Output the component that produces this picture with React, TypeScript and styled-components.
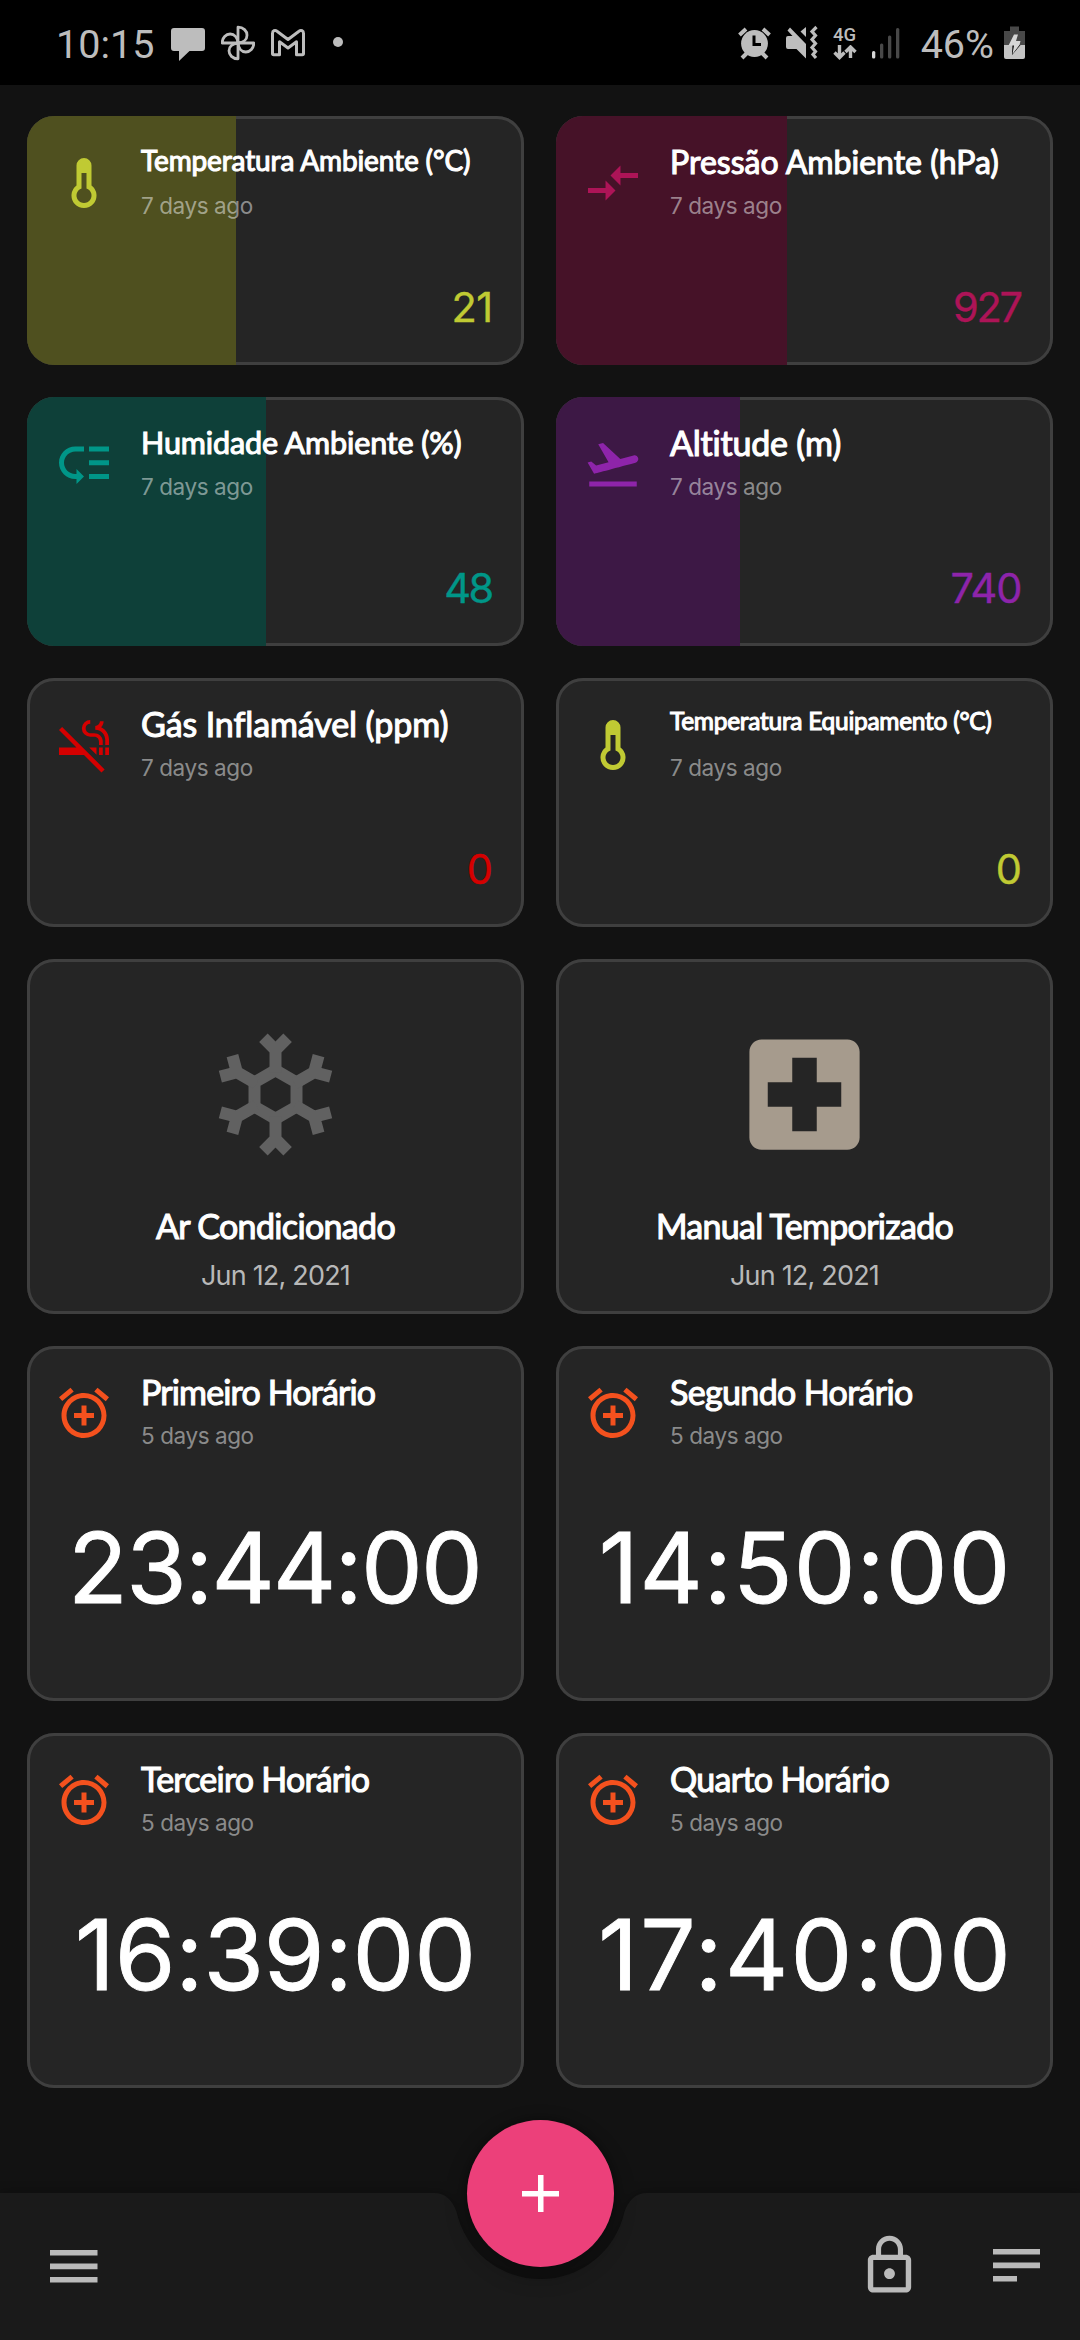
import React from "react";
import styled, { createGlobalStyle } from "styled-components";
import {
  MdAlarmAdd,
  MdCompareArrows,
  MdFlightTakeoff,
  MdLocalHospital,
  MdLockOutline,
  MdLowPriority,
  MdSmokeFree,
} from "react-icons/md";

const GlobalStyle = createGlobalStyle`
  html, body { margin: 0; background: #121212; }
  * { box-sizing: border-box; }
  svg { display: block; flex: none; }
`;

const Screen = styled.div`
  width: 1080px;
  height: 2340px;
  display: flex;
  flex-direction: column;
  overflow: hidden;
  background: #121212;
  color: #fff;
  font-family: Lato, "Liberation Sans", sans-serif;
`;

/* ---------- status bar ---------- */

const StatusBar = styled.header`
  height: 85px;
  flex: none;
  display: flex;
  justify-content: space-between;
  align-items: center;
  padding: 0 55px 0 56px;
  background: #000;
  color: #bdbdbd;
  font-family: Roboto, "Liberation Sans", sans-serif;
`;

const StatusGroup = styled.div<{ $gap: number }>`
  display: flex;
  align-items: center;
  gap: ${(p) => p.$gap}px;
`;

const StatusText = styled.span`
  font-size: 39.5px;
  line-height: 78px;
  padding-top: 4px;
  white-space: nowrap;
`;

const Dot = styled.span`
  width: 10px;
  height: 10px;
  margin: 0 0 1px 12px;
  border-radius: 50%;
  background: currentColor;
`;

const Network = styled.span`
  display: flex;
  flex-direction: column;
  align-items: center;
  width: 24px;
  font-size: 18.5px;
  font-weight: 500;
  line-height: 19px;
`;

const ChatIcon = () => (
  <svg width="34" height="36" viewBox="0 0 34 36" fill="currentColor">
    <path d="M3 3h28a3 3 0 0 1 3 3v17a3 3 0 0 1-3 3H18.500L8 36V26H3a3 3 0 0 1-3-3V6a3 3 0 0 1 3-3z" />
  </svg>
);

const PinwheelIcon = () => (
  <svg width="34" height="36" viewBox="0 0 34 36" fill="none" stroke="currentColor" strokeWidth="2.800" strokeLinejoin="round">
    {[0, 90, 180, 270].map((angle) => (
      <path key={angle} transform={`rotate(${angle} 17 18)`} d="M17 18V2.200C22.500 2.200 26 6 26 10.200S22.500 17.500 17 18z" />
    ))}
  </svg>
);

const MailIcon = () => (
  <svg width="34" height="36" viewBox="0 0 34 36" fill="none" stroke="currentColor" strokeWidth="3" strokeLinejoin="round">
    <path d="M1.500 28.500V8.500C1.500 5.500 4 4.600 6 6.200L17 14.500 28 6.200C30 4.600 32.500 5.500 32.500 8.500V28.500c0 .8-.4 1.200-1.200 1.200H25.500V16.800L17 23 8.500 16.800V29.700H2.700c-.8 0-1.200-.4-1.200-1.200z" />
  </svg>
);

const AlarmIcon = () => (
  <svg width="33" height="36" viewBox="0 0 33 36">
    <g stroke="#bdbdbd" strokeWidth="4" fill="none">
      <path d="M1.500 10 8 4M25 4l6.500 6M9 28l-5 5M24 28l5 5" />
    </g>
    <circle cx="16.500" cy="18.500" r="13.400" fill="#bdbdbd" />
    <path d="M16 10.500V19.500h7" stroke="#000" strokeWidth="3" fill="none" />
  </svg>
);

const MuteIcon = () => (
  <svg width="32" height="36" viewBox="0 0 32 36" fill="#bdbdbd">
    <path d="M4 2.500 20 19v14.500L10.500 24H2a2 2 0 0 1-2-2V13a2 2 0 0 1 2-2h4.500L1.500 5.500z" />
    <path d="M20 2v10l-5.500-5.500z" />
    <path d="M30.500 2 26 6.500l3.500 4-3.500 4 3.500 4-3.500 4 3.500 4-2.500 3 3 3.500" fill="none" stroke="#bdbdbd" strokeWidth="3.200" />
  </svg>
);

const DataArrows = () => (
  <svg width="24" height="15" viewBox="0 0 24 15" fill="none" stroke="currentColor" strokeWidth="3.400">
    <path d="M6.500 0v12M1.500 7.500l5 5 5-5M17.500 13V2.500M12.500 7l5-5 5 5" />
  </svg>
);

const SignalIcon = () => (
  <svg width="28" height="36" viewBox="0 0 28 36">
    <rect x="0" y="26" width="3.300" height="7.500" rx="1.500" fill="#d6d6d6" />
    <rect x="8" y="18.500" width="3.300" height="15" rx="1.500" fill="#484848" />
    <rect x="16" y="10.500" width="3.300" height="23" rx="1.500" fill="#484848" />
    <rect x="24" y="3" width="3.300" height="30.500" rx="1.500" fill="#484848" />
  </svg>
);

const BatteryIcon = () => (
  <svg width="21" height="36" viewBox="0 0 21 36">
    <path d="M6 1.500h9V6h6v14H0V6h6z" fill="#484848" />
    <path d="M0 20h21v12a2 2 0 0 1-2 2H2a2 2 0 0 1-2-2z" fill="#c4c4c4" />
    <path d="M8.500 20 8 30l8.500-10z" fill="#000" />
    <path d="M10 9.500h4L12 16h4.500L15.500 20 8.500 29l1.500-8.500H4.500z" fill="#d6d6d6" />
  </svg>
);

/* ---------- dashboard cards ---------- */

const Grid = styled.main`
  flex: none;
  display: grid;
  grid-template-columns: repeat(2, 497px);
  grid-template-rows: repeat(3, 249px) repeat(3, 355px);
  gap: 32px;
  padding: 31px 27px 0;
`;

const Card = styled.section`
  position: relative;
  display: flex;
  flex-direction: column;
  overflow: hidden;
  border-radius: 27px;
  background: #252525;
  box-shadow: inset 0 0 0 3px #3f3f3f;
`;

const Progress = styled.div<{ $tint: string }>`
  position: absolute;
  top: 0;
  bottom: 0;
  left: 0;
  background: ${(p) => p.$tint};
`;

const CardHeader = styled.div`
  position: relative;
  display: flex;
  gap: 27px;
  height: 103px;
  padding: 26px 0 0 27px;
`;

const IconSlot = styled.div<{ $color: string }>`
  margin-top: 11px;
  color: ${(p) => p.$color};
`;

const Labels = styled.div`
  display: flex;
  flex-direction: column;
  gap: 10px;
`;

const Title = styled.h2<{ $size?: number; $spacing?: number; $lift?: number }>`
  margin: 0 0 ${(p) => 2 * (p.$lift ?? 0)}px;
  font-size: ${(p) => p.$size ?? 34}px;
  font-weight: 400;
  line-height: ${(p) => 40 - 2 * (p.$lift ?? 0)}px;
  letter-spacing: ${(p) => p.$spacing ?? 0}px;
  -webkit-text-stroke: 1.1px currentColor;
  white-space: nowrap;
`;

const Age = styled.span`
  font-family: Inter, "Liberation Sans", sans-serif;
  font-size: 22.5px;
  line-height: 28px;
  letter-spacing: -0.42px;
  color: rgba(255, 255, 255, 0.48);
  white-space: nowrap;
`;

const Reading = styled.span<{ $color: string; $spacing: number }>`
  position: relative;
  margin: auto ${(p) => 31 - p.$spacing * 0.5}px 33px auto;
  font-family: Inter, "Liberation Sans", sans-serif;
  font-size: 41.5px;
  line-height: 50px;
  letter-spacing: ${(p) => p.$spacing}px;
  color: ${(p) => p.$color};
  -webkit-text-stroke: 0.4px currentColor;
`;

const Time = styled.span<{ $spacing: number }>`
  margin: 64px ${(p) => -p.$spacing}px 0 0;
  align-self: center;
  font-family: Inter, "Liberation Sans", sans-serif;
  font-size: 98px;
  line-height: 110px;
  letter-spacing: ${(p) => p.$spacing}px;
  -webkit-text-stroke: 0.9px currentColor;
  white-space: nowrap;
`;

const ToggleCard = styled(Card)`
  align-items: center;
  padding-top: 62px;
`;

const ToggleIcon = styled.div<{ $color: string }>`
  height: 147px;
  margin-bottom: 38px;
  color: ${(p) => p.$color};
`;

const DateText = styled.span`
  margin-top: 14px;
  font-family: Inter, "Liberation Sans", sans-serif;
  font-size: 27px;
  line-height: 32px;
  letter-spacing: -0.8px;
  color: #b8b8b8;
`;

const ThermometerIcon = ({ size }: { size: number }) => (
  <svg width={size} height={size} viewBox="0 0 24 24" fill="currentColor" fillRule="evenodd">
    <path d="M15 13V5a3 3 0 0 0-6 0v8a5 5 0 1 0 6 0zM11 8h2v6.170a3 3 0 1 1-2 0z" />
  </svg>
);

const SnowflakeIcon = () => (
  <svg width="147" height="147" viewBox="-73.500 -73.500 147 147" fill="none" stroke="currentColor" strokeWidth="12">
    <path d="M0-24.300 21-12.150V12.150L0 24.300-21 12.150V-12.150z" />
    {[0, 60, 120, 180, 240, 300].map((angle) => (
      <path key={angle} transform={`rotate(${angle})`} d="M0-22V-45M-12.100-56.700 0-44.600 12.100-56.700" />
    ))}
  </svg>
);

type Sensor = {
  title: string;
  size?: number;
  spacing: number;
  lift?: number;
  icon: React.ComponentType<{ size: number }>;
  color: string;
  tint?: string;
  fill?: number;
  value: string;
  valueSpacing: number;
};

const sensors: Sensor[] = [
  { title: "Temperatura Ambiente (°C)", size: 28, spacing: -0.13, lift: 1.7, icon: ThermometerIcon, color: "#c0ca33", tint: "#4f501f", fill: 42, value: "21", valueSpacing: -0.5 },
  { title: "Pressão Ambiente (hPa)", size: 32, spacing: 0, icon: MdCompareArrows, color: "#ad1457", tint: "#461228", fill: 46.4, value: "927", valueSpacing: -2.2 },
  { title: "Humidade Ambiente (%)", size: 30.5, spacing: -0.12, lift: 0.6, icon: MdLowPriority, color: "#009688", tint: "#0e4039", fill: 48, value: "48", valueSpacing: -2.4 },
  { title: "Altitude (m)", spacing: -0.2, icon: MdFlightTakeoff, color: "#8e24aa", tint: "#3d1845", fill: 37, value: "740", valueSpacing: -1 },
  { title: "Gás Inflamável (ppm)", spacing: -0.1, icon: MdSmokeFree, color: "#d50000", value: "0", valueSpacing: 0 },
  { title: "Temperatura Equipamento (°C)", size: 24.5, spacing: -0.28, lift: 3.5, icon: ThermometerIcon, color: "#c0ca33", value: "0", valueSpacing: 0 },
];

const timers = [
  { title: "Primeiro Horário", spacing: -0.85, time: "23:44:00", timeSpacing: -1.75 },
  { title: "Segundo Horário", spacing: -0.65, time: "14:50:00", timeSpacing: 1 },
  { title: "Terceiro Horário", spacing: -0.78, time: "16:39:00", timeSpacing: -0.15 },
  { title: "Quarto Horário", spacing: -0.7, time: "17:40:00", timeSpacing: 2.2 },
];

/* ---------- bottom bar ---------- */

const BottomArea = styled.footer`
  position: relative;
  flex: none;
  height: 147px;
  margin-top: auto;
  filter: drop-shadow(0 -2px 5px rgba(0, 0, 0, 0.25));
`;

const Bar = styled.nav`
  display: flex;
  align-items: center;
  height: 147px;
  padding: 0 40px 0 50px;
  background: #1a1a1a;
  color: #bababa;
  clip-path: path("M0 0H434C446 0 453 8 456.600 19A86 86 0 0 0 624.400 19C628 8 635 0 647 0H1080V147H0Z");
`;

const BarActions = styled.div`
  display: flex;
  align-items: center;
  gap: 71px;
  margin: 0 0 3px auto;
`;

const AddButton = styled.button`
  position: absolute;
  left: 467px;
  top: -73px;
  width: 147px;
  height: 147px;
  padding: 0;
  border: 0;
  border-radius: 50%;
  display: grid;
  place-items: center;
  color: #fff;
  background: #ec407a;
  box-shadow: 0 8px 22px rgba(0, 0, 0, 0.3);
`;

export default function App() {
  return (
    <>
      <GlobalStyle />
      <Screen>
        <StatusBar>
          <StatusGroup $gap={17}>
            <StatusText>10:15</StatusText>
            <StatusGroup $gap={16}>
              <ChatIcon />
              <PinwheelIcon />
              <MailIcon />
              <Dot />
            </StatusGroup>
          </StatusGroup>
          <StatusGroup $gap={21}>
            <StatusGroup $gap={15}>
              <AlarmIcon />
              <MuteIcon />
              <Network>
                4G
                <DataArrows />
              </Network>
              <SignalIcon />
            </StatusGroup>
            <StatusGroup $gap={10}>
              <StatusText>46%</StatusText>
              <BatteryIcon />
            </StatusGroup>
          </StatusGroup>
        </StatusBar>

        <Grid>
          {sensors.map(({ icon: Icon, ...s }) => (
            <Card key={s.title}>
              {s.tint && <Progress $tint={s.tint} style={{ width: `${s.fill}%` }} />}
              <CardHeader>
                <IconSlot $color={s.color}>
                  <Icon size={60} />
                </IconSlot>
                <Labels>
                  <Title $size={s.size} $spacing={s.spacing} $lift={s.lift}>{s.title}</Title>
                  <Age>7 days ago</Age>
                </Labels>
              </CardHeader>
              <Reading $color={s.color} $spacing={s.valueSpacing}>{s.value}</Reading>
            </Card>
          ))}

          <ToggleCard>
            <ToggleIcon $color="#616161">
              <SnowflakeIcon />
            </ToggleIcon>
            <Title $spacing={-0.65}>Ar Condicionado</Title>
            <DateText>Jun 12, 2021</DateText>
          </ToggleCard>
          <ToggleCard>
            <ToggleIcon $color="#a69b8d">
              <MdLocalHospital size={147} />
            </ToggleIcon>
            <Title $spacing={-0.7}>Manual Temporizado</Title>
            <DateText>Jun 12, 2021</DateText>
          </ToggleCard>

          {timers.map((t) => (
            <Card key={t.title}>
              <CardHeader>
                <IconSlot $color="#f4511e">
                  <MdAlarmAdd size={60} />
                </IconSlot>
                <Labels>
                  <Title $spacing={t.spacing}>{t.title}</Title>
                  <Age>5 days ago</Age>
                </Labels>
              </CardHeader>
              <Time $spacing={t.timeSpacing}>{t.time}</Time>
            </Card>
          ))}
        </Grid>

        <BottomArea>
          <Bar>
            <svg width="48" height="33" viewBox="0 0 48 33" fill="currentColor">
              <path d="M0 0h47.500v5.600H0zM0 13.600h47.500v5.600H0zM0 27h47.500v5.600H0z" />
            </svg>
            <BarActions>
              <MdLockOutline size={65} />
              <svg width="47" height="33" viewBox="0 0 47 33" fill="currentColor">
                <path d="M0 0h47v5.600H0zM0 13.600h47v5.600H0zM0 27h24v5.600H0z" />
              </svg>
            </BarActions>
          </Bar>
          <AddButton aria-label="+">
            <svg width="37" height="37" viewBox="0 0 37 37" fill="currentColor">
              <path d="M16 0h5.500v16H37v5.500H21.500V37H16V21.500H0V16h16z" />
            </svg>
          </AddButton>
        </BottomArea>
      </Screen>
    </>
  );
}
